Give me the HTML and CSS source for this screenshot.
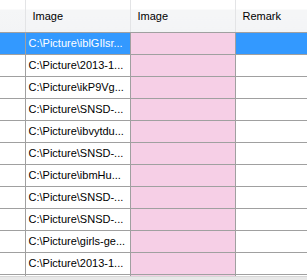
FILE: index.html
```html
<!DOCTYPE html>
<html lang="en">
<head>
    <meta charset="UTF-8">
    <title>Pictures grid</title>
    <link rel="stylesheet" href="styles.css">
</head>
<body>
    <div class="grid">
        <table class="grid-table">
            <colgroup>
                <col class="col-lead">
                <col class="col-path">
                <col class="col-image">
                <col class="col-remark">
            </colgroup>
            <thead>
                <tr>
                    <th></th>
                    <th>Image</th>
                    <th>Image</th>
                    <th>Remark</th>
                </tr>
            </thead>
            <tbody>
                <tr class="selected">
                    <td></td>
                    <td>C:\Picture\iblGIlsr...</td>
                    <td class="thumb"></td>
                    <td></td>
                </tr>
                <tr><td></td><td>C:\Picture\2013-1...</td><td class="thumb"></td><td></td></tr>
                <tr><td></td><td>C:\Picture\ikP9Vg...</td><td class="thumb"></td><td></td></tr>
                <tr><td></td><td>C:\Picture\SNSD-...</td><td class="thumb"></td><td></td></tr>
                <tr><td></td><td>C:\Picture\ibvytdu...</td><td class="thumb"></td><td></td></tr>
                <tr><td></td><td>C:\Picture\SNSD-...</td><td class="thumb"></td><td></td></tr>
                <tr><td></td><td>C:\Picture\ibmHu...</td><td class="thumb"></td><td></td></tr>
                <tr><td></td><td>C:\Picture\SNSD-...</td><td class="thumb"></td><td></td></tr>
                <tr><td></td><td>C:\Picture\SNSD-...</td><td class="thumb"></td><td></td></tr>
                <tr><td></td><td>C:\Picture\girls-ge...</td><td class="thumb"></td><td></td></tr>
                <tr><td></td><td>C:\Picture\2013-1...</td><td class="thumb"></td><td></td></tr>
                <tr><td></td><td></td><td class="thumb"></td><td></td></tr>
            </tbody>
        </table>
        <div class="hscroll"></div>
    </div>
</body>
</html>
```

FILE: styles.css
```css
/* base */
html, body {
    margin: 0;
    padding: 0;
    background: #fff;
}

body {
    font-family: "Liberation Sans", Arial, sans-serif;
    font-size: 11px;
    color: #000;
}

/* grid container */
.grid {
    width: 307px;
    height: 280px;
    overflow: hidden;
    position: relative;
    background: #fff;
}

.grid-table {
    border-collapse: collapse;
    table-layout: fixed;
    width: 339px;
}

.col-lead { width: 25px; }
.col-path { width: 105px; }
.col-image { width: 105px; }
.col-remark { width: 104px; }

/* header */
.grid-table th {
    height: 32px;
    padding: 0 0 0 7px;
    text-align: left;
    font-weight: normal;
    white-space: nowrap;
    background: linear-gradient(#ffffff 0, #ffffff 9px, #f5f6f7 10px, #f3f4f6 100%);
    border-right: 1px solid #e3e4e6;
    border-bottom: 1px solid #a0a0a0;
    box-sizing: border-box;
}

/* rows */
.grid-table td {
    height: 21px;
    padding: 0 0 0 3px;
    white-space: nowrap;
    overflow: hidden;
    border-right: 1px solid #a0a0a0;
    border-bottom: 1px solid #a0a0a0;
}

.grid-table td.thumb {
    background: #f6cfe6;
}

.grid-table tr.selected td {
    background: #3399ff;
    color: #fff;
}

.grid-table tr.selected td.thumb {
    background: #f6cfe6;
}

/* bottom scrollbar edge */
.hscroll {
    position: absolute;
    left: 0;
    right: 0;
    bottom: 0;
    height: 3px;
    background: #e8e8e8;
    border-top: 1px solid #d6d6d6;
}
```
